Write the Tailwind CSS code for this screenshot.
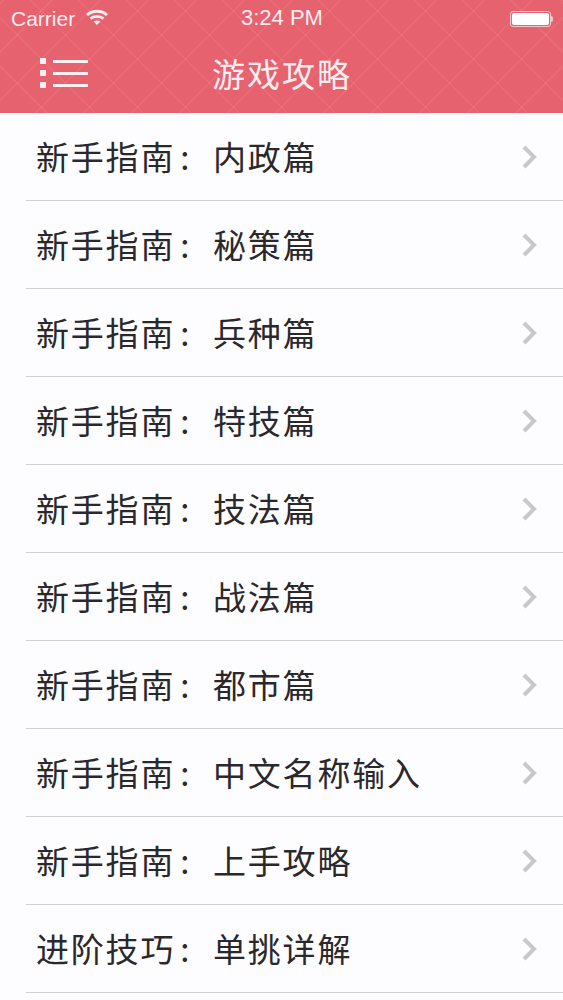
<!DOCTYPE html>
<html lang="zh-CN">
<head>
    <meta charset="UTF-8">
    <meta name="viewport" content="width=device-width, initial-scale=1.0">
    <title>游戏攻略</title>
    <script src="https://cdn.jsdelivr.net/npm/@tailwindcss/browser@4"></script>
</head>
<body class="bg-[#fdfcfe] font-['Noto_Sans_CJK_SC',sans-serif] h-[1000px] w-[563px] overflow-hidden">
    <!-- Header -->
    <header class="h-[113px] bg-[#e7626f] bg-[repeating-linear-gradient(45deg,transparent_0,transparent_32.5px,rgba(255,255,255,0.06)_32.5px,rgba(255,255,255,0.06)_34px),repeating-linear-gradient(-45deg,transparent_0,transparent_32.5px,rgba(255,255,255,0.06)_32.5px,rgba(255,255,255,0.06)_34px)] text-[#fdeef0]">
        <!-- Status bar -->
        <div class="h-[37px] relative flex items-center justify-between pl-[11px] pr-[10px] font-['Liberation_Sans',sans-serif] text-[21px]">
            <div class="flex items-center gap-[11px]">
                <span>Carrier</span>
                <svg width="22" height="16" viewBox="0 0 22 16" fill="none" stroke="#fdeef0" stroke-width="2.8" class="-mt-[3px]">
                    <path d="M1 6 C6.5 1 15.5 1 21 6"/>
                    <path d="M4.5 9.6 C8 6.5 14 6.5 17.5 9.6"/>
                    <path d="M11 16 L7.6 12.6 C9.6 11.2 12.4 11.2 14.4 12.6 Z" fill="#fdeef0" stroke="none"/>
                </svg>
            </div>
            <span class="absolute left-[241px] top-[1px] text-[22px]">3:24 PM</span>
            <div class="flex items-center">
                <div class="w-[41px] h-[16px] rounded-[3px] border border-[#f6c9ce] p-[1px]">
                    <div class="w-full h-full rounded-[2px] bg-white"></div>
                </div>
                <div class="w-[2px] h-[6px] rounded-r-full bg-[#f6c9ce]"></div>
            </div>
        </div>
        <!-- Nav bar -->
        <div class="h-[76px] relative flex items-center pl-[40px] pb-[4px]">
            <div class="flex flex-col gap-[6px]">
                <div class="flex items-center gap-[7px]"><div class="w-[6px] h-[6px] bg-[#fdeef0]"></div><div class="w-[35px] h-[3px] bg-[#fdeef0]"></div></div>
                <div class="flex items-center gap-[7px]"><div class="w-[6px] h-[6px] bg-[#fdeef0]"></div><div class="w-[35px] h-[3px] bg-[#fdeef0]"></div></div>
                <div class="flex items-center gap-[7px]"><div class="w-[6px] h-[6px] bg-[#fdeef0]"></div><div class="w-[35px] h-[3px] bg-[#fdeef0]"></div></div>
            </div>
            <h1 class="absolute left-[212px] top-[13px] text-[33px] leading-[46px] tracking-[2px] font-normal">游戏攻略</h1>
        </div>
    </header>

    <!-- List -->
    <ul id="list" class="pl-[26px]">
        <li class="h-[88px] flex items-center justify-between border-b border-[#cfcdcf] pl-[10px] pr-[26px] text-[33px] tracking-[1.8px] text-[#2a282a]"><span class="flex"><span class="w-[177px]">新手指南<span class="ml-[5px]">:</span></span><span>内政篇</span></span><svg width="15" height="24" viewBox="0 0 15 24" fill="none" stroke="#c8c7c9" stroke-width="4"><path d="M2 2 L12 12 L2 22"/></svg></li>
        <li class="h-[88px] flex items-center justify-between border-b border-[#cfcdcf] pl-[10px] pr-[26px] text-[33px] tracking-[1.8px] text-[#2a282a]"><span class="flex"><span class="w-[177px]">新手指南<span class="ml-[5px]">:</span></span><span>秘策篇</span></span><svg width="15" height="24" viewBox="0 0 15 24" fill="none" stroke="#c8c7c9" stroke-width="4"><path d="M2 2 L12 12 L2 22"/></svg></li>
        <li class="h-[88px] flex items-center justify-between border-b border-[#cfcdcf] pl-[10px] pr-[26px] text-[33px] tracking-[1.8px] text-[#2a282a]"><span class="flex"><span class="w-[177px]">新手指南<span class="ml-[5px]">:</span></span><span>兵种篇</span></span><svg width="15" height="24" viewBox="0 0 15 24" fill="none" stroke="#c8c7c9" stroke-width="4"><path d="M2 2 L12 12 L2 22"/></svg></li>
        <li class="h-[88px] flex items-center justify-between border-b border-[#cfcdcf] pl-[10px] pr-[26px] text-[33px] tracking-[1.8px] text-[#2a282a]"><span class="flex"><span class="w-[177px]">新手指南<span class="ml-[5px]">:</span></span><span>特技篇</span></span><svg width="15" height="24" viewBox="0 0 15 24" fill="none" stroke="#c8c7c9" stroke-width="4"><path d="M2 2 L12 12 L2 22"/></svg></li>
        <li class="h-[88px] flex items-center justify-between border-b border-[#cfcdcf] pl-[10px] pr-[26px] text-[33px] tracking-[1.8px] text-[#2a282a]"><span class="flex"><span class="w-[177px]">新手指南<span class="ml-[5px]">:</span></span><span>技法篇</span></span><svg width="15" height="24" viewBox="0 0 15 24" fill="none" stroke="#c8c7c9" stroke-width="4"><path d="M2 2 L12 12 L2 22"/></svg></li>
        <li class="h-[88px] flex items-center justify-between border-b border-[#cfcdcf] pl-[10px] pr-[26px] text-[33px] tracking-[1.8px] text-[#2a282a]"><span class="flex"><span class="w-[177px]">新手指南<span class="ml-[5px]">:</span></span><span>战法篇</span></span><svg width="15" height="24" viewBox="0 0 15 24" fill="none" stroke="#c8c7c9" stroke-width="4"><path d="M2 2 L12 12 L2 22"/></svg></li>
        <li class="h-[88px] flex items-center justify-between border-b border-[#cfcdcf] pl-[10px] pr-[26px] text-[33px] tracking-[1.8px] text-[#2a282a]"><span class="flex"><span class="w-[177px]">新手指南<span class="ml-[5px]">:</span></span><span>都市篇</span></span><svg width="15" height="24" viewBox="0 0 15 24" fill="none" stroke="#c8c7c9" stroke-width="4"><path d="M2 2 L12 12 L2 22"/></svg></li>
        <li class="h-[88px] flex items-center justify-between border-b border-[#cfcdcf] pl-[10px] pr-[26px] text-[33px] tracking-[1.8px] text-[#2a282a]"><span class="flex"><span class="w-[177px]">新手指南<span class="ml-[5px]">:</span></span><span>中文名称输入</span></span><svg width="15" height="24" viewBox="0 0 15 24" fill="none" stroke="#c8c7c9" stroke-width="4"><path d="M2 2 L12 12 L2 22"/></svg></li>
        <li class="h-[88px] flex items-center justify-between border-b border-[#cfcdcf] pl-[10px] pr-[26px] text-[33px] tracking-[1.8px] text-[#2a282a]"><span class="flex"><span class="w-[177px]">新手指南<span class="ml-[5px]">:</span></span><span>上手攻略</span></span><svg width="15" height="24" viewBox="0 0 15 24" fill="none" stroke="#c8c7c9" stroke-width="4"><path d="M2 2 L12 12 L2 22"/></svg></li>
        <li class="h-[88px] flex items-center justify-between border-b border-[#cfcdcf] pl-[10px] pr-[26px] text-[33px] tracking-[1.8px] text-[#2a282a]"><span class="flex"><span class="w-[177px]">进阶技巧<span class="ml-[5px]">:</span></span><span>单挑详解</span></span><svg width="15" height="24" viewBox="0 0 15 24" fill="none" stroke="#c8c7c9" stroke-width="4"><path d="M2 2 L12 12 L2 22"/></svg></li>
    </ul>
</body>
</html>
